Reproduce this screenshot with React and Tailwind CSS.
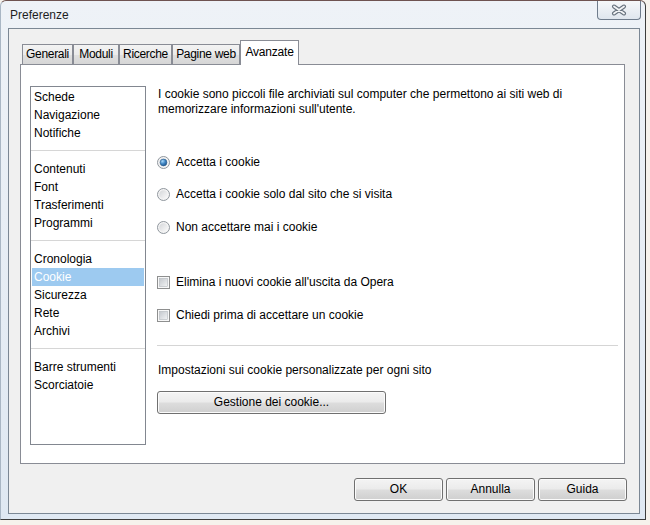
import React from "react";

function Radio({ checked }) {
  return (
    <svg width="13" height="13" viewBox="0 0 13 13" className="shrink-0">
      <defs>
        <linearGradient id="rOffFill" x1="0" y1="0" x2="1" y2="1">
          <stop offset="0" stopColor="#d4d6d9" />
          <stop offset="1" stopColor="#fbfbfb" />
        </linearGradient>
        <radialGradient id="rOnDot" cx="0.35" cy="0.3" r="0.8">
          <stop offset="0" stopColor="#a8d8fa" />
          <stop offset="0.5" stopColor="#3f86c4" />
          <stop offset="1" stopColor="#1b4f86" />
        </radialGradient>
      </defs>
      <circle cx="6.5" cy="6.5" r="6" fill="#f4f4f4" stroke="#8f969d" strokeWidth="1" />
      <circle cx="6.5" cy="6.5" r="4.3" fill="url(#rOffFill)" />
      {checked && <circle cx="6.5" cy="6.5" r="3.4" fill="url(#rOnDot)" stroke="#2c5f8e" strokeWidth="0.6" />}
    </svg>
  );
}

function Check() {
  return (
    <svg width="13" height="13" viewBox="0 0 13 13" className="shrink-0">
      <defs>
        <linearGradient id="cbFill" x1="0" y1="0" x2="1" y2="1">
          <stop offset="0" stopColor="#c4c8cd" />
          <stop offset="1" stopColor="#f3f4f5" />
        </linearGradient>
      </defs>
      <rect x="0.5" y="0.5" width="12" height="12" fill="#f8f8f8" stroke="#8e8f8f" />
      <rect x="2.5" y="2.5" width="8" height="8" fill="url(#cbFill)" stroke="#b3b8bd" strokeWidth="0.6" />
    </svg>
  );
}

function WinButton({ children, className }) {
  return (
    <div
      className={
        "h-[23px] flex items-center justify-center rounded-[3px] border border-[#707070] bg-[linear-gradient(to_bottom,#f4f4f4_0%,#ebebeb_48%,#dddddd_52%,#cfcfcf_100%)] shadow-[inset_0_0_0_1px_#fbfbfb] " +
        (className || "")
      }
    >
      {children}
    </div>
  );
}

const tabs = [
  { label: "Generali", w: "w-[51px]" },
  { label: "Moduli", w: "w-[46px]" },
  { label: "Ricerche", w: "w-[53px]" },
  { label: "Pagine web", w: "w-[68px]" },
];

const groups = [
  ["Schede", "Navigazione", "Notifiche"],
  ["Contenuti", "Font", "Trasferimenti", "Programmi"],
  ["Cronologia", "Cookie", "Sicurezza", "Rete", "Archivi"],
  ["Barre strumenti", "Scorciatoie"],
];

export default function App() {
  return (
    <div className="w-[650px] h-[525px] bg-[#f6f2ec] font-['Liberation_Sans',Arial,sans-serif] text-[12px] leading-[15px] text-black overflow-hidden">
      <div className="w-[646px] h-[520px] flex flex-col rounded-t-[6px] border border-t-[#6e5350] border-l-[#a9b6c4] border-r-[#3d3d3d] border-b-[#3d3d3d] bg-[linear-gradient(to_bottom,#eef2f7,#dfe8f2)]">
        {/* title bar */}
        <div className="h-[27px] shrink-0 flex justify-between">
          <div className="pl-[9px] pt-[7px] text-[#1e1e1e]">Preferenze</div>
          <div className="mr-[4px] h-[19px] w-[44px] flex items-center justify-center rounded-b-[4px] border border-t-0 border-[#6f7c8c] bg-[linear-gradient(to_bottom,#f6f8fa,#dfe6ee)]">
            <svg width="18" height="12" viewBox="0 0 18 12">
              <path d="M4 2.5 L14 9.5 M14 2.5 L4 9.5" stroke="#66717d" strokeWidth="4" strokeLinecap="round" />
              <path d="M4 2.5 L14 9.5 M14 2.5 L4 9.5" stroke="#f3f5f7" strokeWidth="1.8" strokeLinecap="round" />
            </svg>
          </div>
        </div>

        {/* client */}
        <div className="ml-[7px] mr-[5px] h-[486px] shrink-0 border border-[#7b8794] bg-[#f0f0f0] flex flex-col pl-[11px] pr-[14px] pt-[11px]">
          {/* tabs */}
          <div className="h-[24px] flex items-end pl-[2px]">
            {tabs.map((t) => (
              <div
                key={t.label}
                className={
                  t.w +
                  " h-[20px] flex items-center justify-center border border-b-0 border-[#898c95] bg-[linear-gradient(to_bottom,#f3f3f3_0%,#ebebeb_50%,#e0e0e0_51%,#d6d6d6_100%)] whitespace-nowrap tracking-[-0.3px]"
                }
              >
                {t.label}
              </div>
            ))}
            <div className="w-[59px] h-[25px] -mb-px relative z-10 flex items-center justify-center pb-[2px] border border-b-0 border-[#898c95] bg-white whitespace-nowrap tracking-[-0.2px]">
              Avanzate
            </div>
          </div>

          {/* tab panel */}
          <div className="h-[400px] shrink-0 border border-[#898c95] bg-white flex pl-[9px] pt-[21px] pr-[6px]">
            {/* list box */}
            <div className="w-[116px] h-[359px] shrink-0 border border-[#828790] bg-white px-[1px] pt-[1px] flex flex-col">
              {groups.map((g, gi) => (
                <div key={gi} className="flex flex-col">
                  {gi > 0 && (
                    <div className="h-[18px] flex flex-col justify-start pt-[8px]">
                      <div className="h-px bg-[#d6d6d6] -mx-[1px]" />
                    </div>
                  )}
                  {g.map((item) => (
                    <div
                      key={item}
                      className={
                        "h-[18px] flex items-center pl-[2px] whitespace-nowrap " +
                        (item === "Cookie" ? "bg-[#9dcaf0] text-white" : "")
                      }
                    >
                      {item}
                    </div>
                  ))}
                </div>
              ))}
            </div>

            {/* content */}
            <div className="flex-1 ml-[11px] pt-[1px] flex flex-col">
              <p className="whitespace-nowrap pl-[1px]">
                I cookie sono piccoli file archiviati sul computer che permettono ai siti web di
                <br />
                memorizzare informazioni sull'utente.
              </p>

              <div className="mt-[36px] h-[18px] flex items-center gap-[6px]">
                <Radio checked />
                <span>Accetta i cookie</span>
              </div>
              <div className="mt-[14px] h-[18px] flex items-center gap-[6px]">
                <Radio />
                <span>Accetta i cookie solo dal sito che si visita</span>
              </div>
              <div className="mt-[15px] h-[18px] flex items-center gap-[6px]">
                <Radio />
                <span>Non accettare mai i cookie</span>
              </div>

              <div className="mt-[37px] h-[18px] flex items-center gap-[6px]">
                <Check />
                <span>Elimina i nuovi cookie all'uscita da Opera</span>
              </div>
              <div className="mt-[15px] h-[18px] flex items-center gap-[6px]">
                <Check />
                <span>Chiedi prima di accettare un cookie</span>
              </div>

              <div className="mt-[21px] h-px bg-[#d5d5d5]" />

              <div className="mt-[17px] pl-[1px]">Impostazioni sui cookie personalizzate per ogni sito</div>

              <WinButton className="mt-[13px] w-[229px]">Gestione dei cookie...</WinButton>
            </div>
          </div>

          {/* bottom buttons */}
          <div className="mt-[14px] flex justify-end gap-[3px] -mr-[2px]">
            <WinButton className="w-[89px]">OK</WinButton>
            <WinButton className="w-[89px]">Annulla</WinButton>
            <WinButton className="w-[89px]">Guida</WinButton>
          </div>
        </div>
      </div>
    </div>
  );
}
